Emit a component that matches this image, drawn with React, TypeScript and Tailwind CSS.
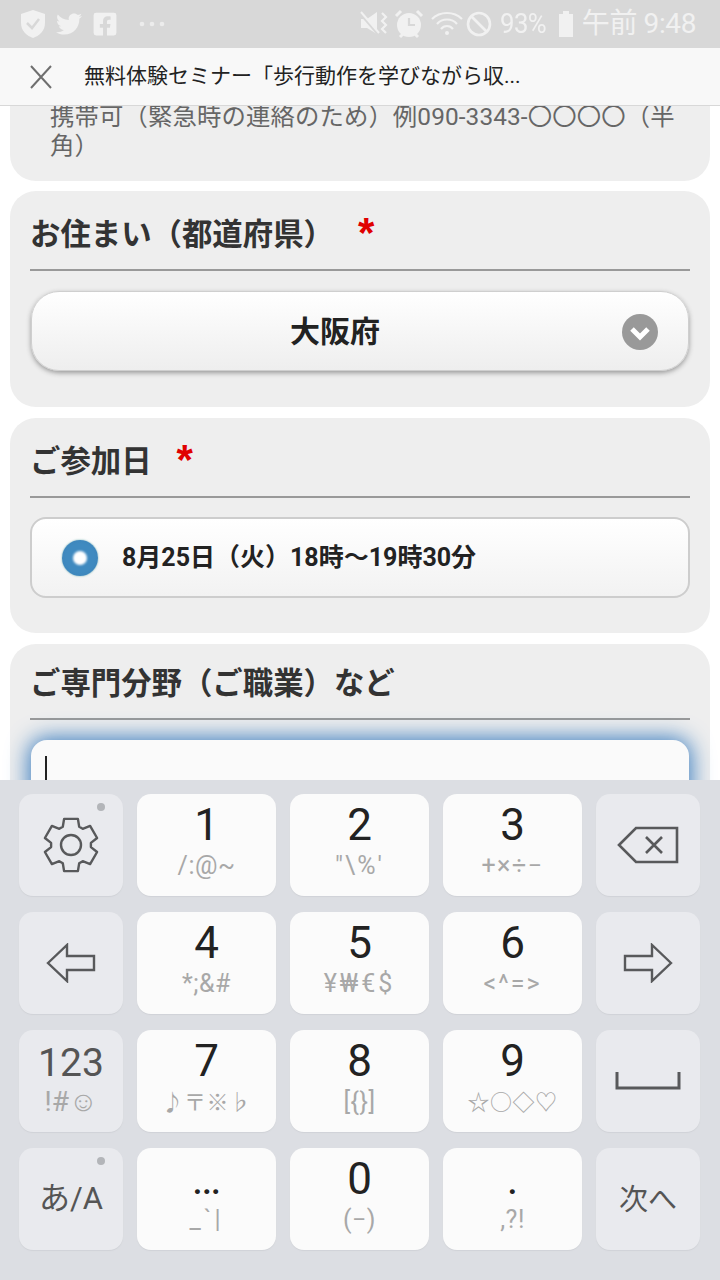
import { FaTwitter, FaFacebookSquare } from "react-icons/fa";

const gear = (() => {
  const pts: string[] = [];
  const cx = 28, cy = 28;
  for (let i = 0; i < 6; i++) {
    const a = (i * Math.PI) / 3 - Math.PI / 2;
    const s = 0.26, m = 0.42;
    const p = (r: number, t: number) => `${(cx + r * Math.cos(t)).toFixed(1)} ${(cy + r * Math.sin(t)).toFixed(1)}`;
    pts.push(p(20, a - m), p(27, a - s), p(27, a + s), p(20, a + m));
  }
  return "M" + pts.join("L") + "Z";
})();

function Dot() {
  return <span className="absolute right-[18px] top-[9px] w-[8px] h-[8px] rounded-full bg-[#b3b5b9]" />;
}

function Key({ main, sub }: { main?: React.ReactNode; sub?: React.ReactNode }) {
  return (
    <div className="relative h-[102px] rounded-[14px] flex flex-col items-center shadow-[0_1px_1px_#d0d2d7] bg-[#fbfbfb]">
      <div className="h-[62px] leading-[62px] text-[44px] text-[#222] font-[Roboto,sans-serif]">{main}</div>
      <div className="-mt-[5px] h-[30px] leading-[30px] text-[25px] text-[#a8a8a8] whitespace-nowrap tracking-[0.5px]">{sub}</div>
    </div>
  );
}

function IconKey({ children }: { children: React.ReactNode }) {
  return (
    <div className="relative h-[102px] rounded-[14px] flex items-center justify-center bg-[#e9eaee] shadow-[0_1px_1px_#d0d2d7]">
      {children}
    </div>
  );
}

function Title({ text, star, starGap }: { text: string; star?: boolean; starGap?: string }) {
  return (
    <div className="mx-[20px] h-[59px] border-b-2 border-[#999] flex items-start">
      <span className="text-[30.4px] font-bold text-[#333] leading-[46px] whitespace-nowrap">{text}</span>
      {star && <span className={`text-[#e00000] text-[42px] font-bold leading-[46px] -mt-[2px] font-['Liberation_Sans',sans-serif] ${starGap}`}>*</span>}
    </div>
  );
}

export default function App() {
  return (
    <div className="w-[720px] h-[1280px] overflow-hidden flex flex-col bg-white font-[Roboto,'Noto_Sans_CJK_JP',sans-serif]">
      {/* status bar */}
      <div className="h-[48px] shrink-0 bg-[#d8d8d8] flex items-center justify-between pl-[20px] pr-[24px] text-[#f1f1f1]">
        <div className="flex items-center gap-[10px]">
          <svg width="26" height="30" viewBox="0 0 26 30">
            <path d="M13 1 L25 5 V14 C25 22 19 27 13 29 C7 27 1 22 1 14 V5 Z" fill="#f1f1f1" />
            <path d="M7 14 L12 19 L19 10" fill="none" stroke="#d8d8d8" strokeWidth="2.5" />
          </svg>
          <FaTwitter size={26} />
          <FaFacebookSquare size={26} />
          <svg width="26" height="6" viewBox="0 0 26 6" className="ml-[11px]" fill="#ececec">
            <circle cx="3" cy="3" r="2.3" />
            <circle cx="13" cy="3" r="2.3" />
            <circle cx="23" cy="3" r="2.3" />
          </svg>
        </div>
        <div className="flex items-center">
          <svg width="28" height="26" viewBox="0 0 28 26" className="mr-[6px]">
            <path d="M1 8 H7 L17 1 V23 L7 17 H1 Z" fill="#f1f1f1" />
            <path d="M1 3 L19 24" stroke="#d8d8d8" strokeWidth="3" />
            <path d="M1 1 L19 22" stroke="#f1f1f1" strokeWidth="2" />
            <path d="M22 2 l4 4 -4 4 4 4 -4 4 4 4" fill="none" stroke="#f1f1f1" strokeWidth="2.2" />
          </svg>
          <svg width="30" height="32" viewBox="0 0 30 32" className="mr-[7px]">
            <circle cx="15" cy="17" r="12" fill="#f1f1f1" />
            <path d="M15 10 V17 H21" fill="none" stroke="#d8d8d8" strokeWidth="2.2" />
            <path d="M2 8 L7 3 M28 8 L23 3 M6 29 L9 26 M24 29 L21 26" stroke="#f1f1f1" strokeWidth="3" />
          </svg>
          <svg width="32" height="28" viewBox="0 0 32 28" className="mr-[3px]" fill="none" stroke="#f1f1f1" strokeWidth="2.2">
            <path d="M1 9 C9 1 23 1 31 9" />
            <path d="M6 14 C11 8 21 8 26 14" />
            <path d="M10 19 C13 15 19 15 22 19" />
            <circle cx="16" cy="23" r="2" fill="#f1f1f1" stroke="none" />
          </svg>
          <svg width="26" height="26" viewBox="0 0 26 26" className="mr-[8px]" fill="none" stroke="#f1f1f1" strokeWidth="2.6">
            <circle cx="13" cy="13" r="11" />
            <path d="M5 5 L21 21" />
          </svg>
          <span className="text-[28px] leading-[48px] tracking-[-0.6px] scale-x-[0.92] origin-left w-[57px] whitespace-nowrap">93%</span>
          <svg width="18" height="28" viewBox="0 0 18 28" className="mr-[7px]">
            <path d="M6 1 H12 V4 H16 V27 H2 V4 H6 Z" fill="#f1f1f1" />
          </svg>
          <span className="text-[28px] leading-[48px] whitespace-nowrap tracking-[-0.4px]">午前 9:48</span>
        </div>
      </div>

      {/* toolbar */}
      <div className="h-[58px] shrink-0 bg-[#f8f8f8] border-b border-[#d8d8d8] flex items-center pl-[30px]">
        <svg width="22" height="24" viewBox="0 0 22 24" fill="none" stroke="#6f6f6f" strokeWidth="2">
          <path d="M1 1 L21 23 M21 1 L1 23" />
        </svg>
        <span className="ml-[32px] text-[21px] text-[#222] whitespace-nowrap">無料体験セミナー「歩行動作を学びながら収...</span>
      </div>

      {/* page */}
      <div className="flex-1 min-h-0 overflow-hidden px-[10px]">
        <div className="flex flex-col gap-[10px]">
          <div className="rounded-b-[26px] bg-[#eeeeee] h-[75px] pl-[40px] pr-[26px]">
            <p className="-mt-[4px] text-[24.4px] leading-[29px] text-[#666] tracking-[0.1px]">携帯可（緊急時の連絡のため）例090-3343-〇〇〇〇（半角）</p>
          </div>

          <div className="rounded-[26px] bg-[#eeeeee] h-[216px] pt-[21px]">
            <Title text="お住まい（都道府県）" star starGap="ml-[24px]" />
            <div className="mx-[21px] mt-[20px] h-[80px] rounded-[28px] bg-gradient-to-b from-white to-[#eeeeee] border border-[#cfcfcf] shadow-[0_2px_5px_#999] flex items-center justify-center pr-[50px] relative">
              <span className="text-[30px] font-bold text-[#222]">大阪府</span>
              <svg width="36" height="36" viewBox="0 0 36 36" className="absolute right-[30px] top-[22px]">
                <circle cx="18" cy="18" r="18" fill="#999" />
                <path d="M10 15 L18 23 L26 15" fill="none" stroke="#fff" strokeWidth="5" />
              </svg>
            </div>
          </div>

          <div className="rounded-[26px] bg-[#eeeeee] h-[215px] mt-[1px] pt-[21px]">
            <Title text="ご参加日" star starGap="ml-[25px]" />
            <div className="mx-[20px] mt-[19px] h-[81px] rounded-[16px] bg-gradient-to-b from-white to-[#f2f2f2] border-2 border-[#cdcdcd] flex items-center pl-[30px]">
              <span className="w-[36px] h-[36px] rounded-full bg-[radial-gradient(circle,#3f8ac0_55%,#3a80b5)] flex items-center justify-center shadow-[0_0_2px_#6aa]">
                <span className="w-[14px] h-[14px] rounded-full bg-white blur-[1px]" />
              </span>
              <span className="ml-[24px] text-[25px] font-bold text-[#222] whitespace-nowrap">8月25日（火）18時〜19時30分</span>
            </div>
          </div>

          <div className="rounded-t-[26px] bg-[#eeeeee] h-[300px] mt-[1px] pt-[17px]">
            <Title text="ご専門分野（ご職業）など" />
            <div className="mx-[21px] mt-[20px] h-[100px] rounded-[16px] bg-[#fafafa] shadow-[0_0_22px_2px_#387bbe] pl-[14px] pt-[16px]">
              <div className="w-[2px] h-[30px] bg-[#222]" />
            </div>
          </div>
        </div>
      </div>

      {/* keyboard */}
      <div className="h-[500px] shrink-0 bg-[#dcdee3] pl-[19px] pr-[20px] pt-[14px] grid grid-cols-[104px_139px_139px_139px_104px] gap-x-[14px] gap-y-[16px] content-start z-10">
        <IconKey>
          <Dot />
          <svg width="56" height="56" viewBox="0 0 56 56" fill="none" stroke="#58595b" strokeWidth="2.4" strokeLinejoin="round">
            <path d={gear} />
            <circle cx="28" cy="28" r="10" />
          </svg>
        </IconKey>
        <Key main="1" sub="/:@~" />
        <Key main="2" sub={<span className="tracking-[2px]">{"\"\\%'"}</span>} />
        <Key main="3" sub={<span className="tracking-[1.5px]">+×÷−</span>} />
        <IconKey>
          <svg width="62" height="38" viewBox="0 0 62 38" fill="none" stroke="#58595b" strokeWidth="2.6">
            <path d="M2 19 L19 2 H60 V36 H19 Z" />
            <path d="M29 11 L45 27 M45 11 L29 27" />
          </svg>
        </IconKey>

        <IconKey>
          <svg width="50" height="40" viewBox="0 0 50 40" fill="none" stroke="#58595b" strokeWidth="2.4">
            <path d="M2 20 L21 2 V13 H48 V27 H21 V38 Z" />
          </svg>
        </IconKey>
        <Key main="4" sub="*;&#" />
        <Key main="5" sub={<span className="tracking-[3px]">¥₩€$</span>} />
        <Key main="6" sub={<span className="tracking-[2px]">{"<^=>"}</span>} />
        <IconKey>
          <svg width="50" height="40" viewBox="0 0 50 40" fill="none" stroke="#58595b" strokeWidth="2.4">
            <path d="M48 20 L29 2 V13 H2 V27 H29 V38 Z" />
          </svg>
        </IconKey>

        <div className="relative h-[102px] rounded-[14px] flex flex-col items-center bg-[#e9eaee] shadow-[0_1px_1px_#d0d2d7]">
          <div className="h-[58px] leading-[66px] text-[39px] text-[#555]">123</div>
          <div className="h-[36px] leading-[28px] text-[28px] text-[#a8a8a8]">!#☺</div>
        </div>
        <Key main="7" sub={<span className="text-[22px]">♪〒※♭</span>} />
        <Key main="8" sub="[{}]" />
        <Key main="9" sub={<span className="text-[22px]">☆○◇♡</span>} />
        <IconKey>
          <svg width="66" height="20" viewBox="0 0 66 20" fill="none" stroke="#58595b" strokeWidth="3">
            <path d="M2 1 V17 H64 V1" />
          </svg>
        </IconKey>

        <IconKey>
          <Dot />
          <span className="text-[31px] text-[#555]">あ/A</span>
        </IconKey>
        <Key main="…" sub={<span className="tracking-[3px]">_`|</span>} />
        <Key main="0" sub="(−)" />
        <Key main="." sub=",?!" />
        <IconKey>
          <span className="text-[29px] text-[#555] mt-[3px]">次へ</span>
        </IconKey>
      </div>
    </div>
  );
}
